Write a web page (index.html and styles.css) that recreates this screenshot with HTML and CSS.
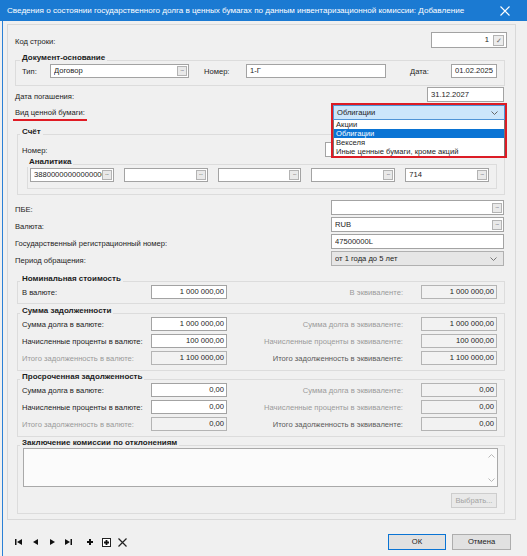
FILE: index.html
```html
<!DOCTYPE html>
<html lang="ru">
<head>
    <meta charset="UTF-8">
    <meta name="viewport" content="width=device-width, initial-scale=1.0">
    <title>Сведения о состоянии государственного долга</title>
    <link rel="stylesheet" href="styles.css">
</head>
<body>
<div class="window">
    <div class="titlebar">
        <span>Сведения о состоянии государственного долга в ценных бумагах по данным инвентаризационной комиссии: Добавление</span>
        <svg width="10" height="10" viewBox="0 0 10 10"><path d="M0.5 0.5L9.5 9.5M9.5 0.5L0.5 9.5" stroke="#fff" stroke-width="1.1"/></svg>
    </div>

    <div class="frame">
        <div class="panel">
            <div class="row row-code">
                <span class="label">Код строки:</span>
                <div class="field num w-code"><span class="val">1</span><span class="check">✓</span></div>
            </div>

            <!-- документ -->
            <div class="group group-doc">
                <div class="group-title">Документ-основание</div>
                <div class="group-box">
                    <div class="doc-row">
                        <span class="glabel w-type">Тип:</span>
                        <div class="field w-typef"><span class="val">Договор</span><span class="dots">...</span></div>
                        <span class="glabel w-num">Номер:</span>
                        <div class="field w-numf"><span class="val">1-Г</span></div>
                        <span class="glabel w-date">Дата:</span>
                        <div class="field w-datef"><span class="val">01.02.2025</span></div>
                    </div>
                </div>
            </div>

            <div class="row row-repay">
                <span class="label">Дата погашения:</span>
                <div class="field w-repay"><span class="val">31.12.2027</span></div>
            </div>

            <div class="row row-kind">
                <span class="label marked">Вид ценной бумаги:</span>
                <div class="combo-anchor">
                    <div class="dropdown">
                        <div class="combo">
                            <span class="val">Облигации</span>
                            <svg width="7" height="4" viewBox="0 0 7 4"><path d="M0.5 0.5L3.5 3.5L6.5 0.5" stroke="#666" fill="none"/></svg>
                        </div>
                        <div class="list">
                            <div class="item">Акции</div>
                            <div class="item active">Облигации</div>
                            <div class="item">Векселя</div>
                            <div class="item">Иные ценные бумаги, кроме акций</div>
                        </div>
                    </div>
                </div>
            </div>

            <!-- счёт -->
            <div class="group group-acc">
                <div class="group-title">Счёт</div>
                <div class="group-box">
                    <div class="row">
                        <span class="glabel">Номер:</span>
                        <div class="field w-accf"><span class="val"></span></div>
                    </div>
                    <div class="group group-an">
                        <div class="group-title">Аналитика</div>
                        <div class="group-box">
                            <div class="an-grid">
                                <div class="field"><span class="val">388000000000000000</span><span class="dots">...</span></div>
                                <div class="field"><span class="val"></span><span class="dots">...</span></div>
                                <div class="field"><span class="val"></span><span class="dots">...</span></div>
                                <div class="field"><span class="val"></span><span class="dots">...</span></div>
                                <div class="field"><span class="val">714</span><span class="dots">...</span></div>
                            </div>
                        </div>
                    </div>
                </div>
            </div>

            <div class="plain-rows">
                <div class="row">
                    <span class="label">ПБЕ:</span>
                    <div class="field w-right"><span class="val"></span><span class="dots">...</span></div>
                </div>
                <div class="row">
                    <span class="label">Валюта:</span>
                    <div class="field w-right"><span class="val">RUB</span><span class="dots">...</span></div>
                </div>
                <div class="row">
                    <span class="label">Государственный регистрационный номер:</span>
                    <div class="field w-right"><span class="val">47500000L</span></div>
                </div>
                <div class="row">
                    <span class="label">Период обращения:</span>
                    <div class="field select w-right">
                        <span class="val">от 1 года до 5 лет</span>
                        <svg width="7" height="4" viewBox="0 0 7 4"><path d="M0.5 0.5L3.5 3.5L6.5 0.5" stroke="#777" fill="none"/></svg>
                    </div>
                </div>
            </div>

            <!-- суммы -->
            <div class="group group-nom">
                <div class="group-title">Номинальная стоимость</div>
                <div class="group-box">
                    <div class="sum-row">
                        <span class="glabel">В валюте:</span>
                        <div class="field num"><span class="val">1 000 000,00</span></div>
                        <span class="glabel right muted">В эквиваленте:</span>
                        <div class="field num off"><span class="val">1 000 000,00</span></div>
                    </div>
                </div>
            </div>

            <div class="group group-sum">
                <div class="group-title">Сумма задолженности</div>
                <div class="group-box sum-rows">
                    <div class="sum-row">
                        <span class="glabel">Сумма долга в валюте:</span>
                        <div class="field num"><span class="val">1 000 000,00</span></div>
                        <span class="glabel right muted">Сумма долга в эквиваленте:</span>
                        <div class="field num off"><span class="val">1 000 000,00</span></div>
                    </div>
                    <div class="sum-row">
                        <span class="glabel">Начисленные проценты в валюте:</span>
                        <div class="field num"><span class="val">100 000,00</span></div>
                        <span class="glabel right muted">Начисленные проценты в эквиваленте:</span>
                        <div class="field num off"><span class="val">100 000,00</span></div>
                    </div>
                    <div class="sum-row">
                        <span class="glabel muted">Итого задолженность в валюте:</span>
                        <div class="field num off"><span class="val">1 100 000,00</span></div>
                        <span class="glabel right half">Итого задолженность в эквиваленте:</span>
                        <div class="field num off"><span class="val">1 100 000,00</span></div>
                    </div>
                </div>
            </div>

            <div class="group group-sum">
                <div class="group-title">Просроченная задолженность</div>
                <div class="group-box sum-rows">
                    <div class="sum-row">
                        <span class="glabel">Сумма долга в валюте:</span>
                        <div class="field num"><span class="val">0,00</span></div>
                        <span class="glabel right muted">Сумма долга в эквиваленте:</span>
                        <div class="field num off"><span class="val">0,00</span></div>
                    </div>
                    <div class="sum-row">
                        <span class="glabel">Начисленные проценты в валюте:</span>
                        <div class="field num"><span class="val">0,00</span></div>
                        <span class="glabel right muted">Начисленные проценты в эквиваленте:</span>
                        <div class="field num off"><span class="val">0,00</span></div>
                    </div>
                    <div class="sum-row">
                        <span class="glabel muted">Итого задолженность в валюте:</span>
                        <div class="field num off"><span class="val">0,00</span></div>
                        <span class="glabel right half">Итого задолженность в эквиваленте:</span>
                        <div class="field num off"><span class="val">0,00</span></div>
                    </div>
                </div>
            </div>

            <div class="group group-note">
                <div class="group-title">Заключение комиссии по отклонениям</div>
                <div class="group-box">
                    <div class="memo">
                        <div class="scroll">
                            <svg width="7" height="4" viewBox="0 0 7 4"><path d="M0.5 3.5L3.5 0.5L6.5 3.5" stroke="#b8b8b8" fill="none"/></svg>
                            <svg width="7" height="4" viewBox="0 0 7 4"><path d="M0.5 0.5L3.5 3.5L6.5 0.5" stroke="#b8b8b8" fill="none"/></svg>
                        </div>
                    </div>
                    <div class="pick-line">
                        <span class="btn btn-off">Выбрать...</span>
                    </div>
                </div>
            </div>
        </div>

        <div class="footer">
            <div class="nav">
                <svg width="7" height="6" viewBox="0 0 7 6"><rect x="0" y="0" width="1.5" height="6"/><path d="M7 0L2 3L7 6Z"/></svg>
                <svg class="gap-a" width="5" height="6" viewBox="0 0 5 6"><path d="M5 0L0 3L5 6Z"/></svg>
                <svg class="gap-b" width="5" height="6" viewBox="0 0 5 6"><path d="M0 0L5 3L0 6Z"/></svg>
                <svg class="gap-c" width="7" height="6" viewBox="0 0 7 6"><path d="M0 0L5 3L0 6Z"/><rect x="5.5" y="0" width="1.5" height="6"/></svg>
                <svg class="gap-d" width="6" height="6" viewBox="0 0 6 6"><path d="M3 0V6M0 3H6" stroke="#111" stroke-width="2"/></svg>
                <svg class="gap-e" width="9" height="9" viewBox="0 0 9 9"><rect x="0.5" y="0.5" width="8" height="8" fill="#fff" stroke="#222"/><path d="M4.5 2V7M2 4.5H7" stroke="#111" stroke-width="1.8"/></svg>
                <svg class="gap-f" width="9" height="9" viewBox="0 0 9 9"><path d="M0.5 0.5L8.5 8.5M8.5 0.5L0.5 8.5" stroke="#222" stroke-width="1.2"/></svg>
            </div>
            <div class="actions">
                <span class="btn btn-main">ОК</span>
                <span class="btn">Отмена</span>
            </div>
        </div>
    </div>
</div>
</body>
</html>
```

FILE: styles.css
```css
* {
    box-sizing: border-box;
}

body {
    margin: 0;
    background: #fff;
    font-family: "Liberation Sans", Arial, sans-serif;
    font-size: 7.6px;
    line-height: 10px;
    color: #1c1c1c;
}

.window {
    width: 527px;
    height: 556px;
    background: #f0f0f0;
    display: flex;
    flex-direction: column;
}

.titlebar {
    height: 21px;
    flex: none;
    background: #1b7ad2;
    color: #fff;
    font-size: 8.1px;
    display: flex;
    align-items: center;
    justify-content: space-between;
    padding: 0 17px 0 7px;
}

.frame {
    flex: 1;
    margin-left: 2px;
    border-left: 1px solid #2a80d6;
    padding: 3px 11px 0 4px;
    display: flex;
    flex-direction: column;
}

.panel {
    height: 496px;
    border: 1px solid #d9d9d9;
    padding: 0 10px 0 7px;
}

.row {
    display: flex;
    align-items: center;
    justify-content: space-between;
    height: 15px;
}

.label {
    padding-top: 4px;
    white-space: nowrap;
}

.glabel {
    padding-top: 2px;
    white-space: nowrap;
}

.muted {
    color: #9a9a9a;
}

.half {
    color: #5a5a5a;
}

/* поля */
.field {
    height: 15px;
    min-width: 0;
    display: flex;
    align-items: center;
    background: #fff;
    border: 1px solid #a3a3a3;
    padding: 0 1px 0 3px;
}

.field .val {
    flex: 1;
    min-width: 0;
    overflow: hidden;
    white-space: nowrap;
}

.num .val {
    text-align: right;
    padding-right: 1px;
}

.off {
    background: #f2f2f2;
    border-color: #b4b4b4;
}

.dots {
    flex: none;
    width: 10px;
    height: 10px;
    border: 1px solid #b3b3b3;
    background: #e9e9e9;
    font-size: 6px;
    line-height: 5px;
    text-align: center;
    color: #333;
    letter-spacing: -0.5px;
}

.check {
    width: 11px;
    height: 11px;
    margin-left: 3px;
    border: 1px solid #b3b3b3;
    background: #ececec;
    color: #666;
    font-size: 7px;
    line-height: 9px;
    text-align: center;
}

.select {
    background: #e6e6e6;
    border-color: #b0b0b0;
    padding-right: 6px;
}

.row-code {
    margin-top: 7px;
    height: 16px;
}

.w-code {
    width: 76px;
    height: 16px;
    margin-right: -2px;
    padding-right: 2px;
}

/* группы */
.group-title {
    position: relative;
    width: fit-content;
    margin-left: 3px;
    margin-bottom: -3px;
    padding: 0 2px;
    background: #f0f0f0;
    font-size: 8px;
    font-weight: bold;
    line-height: 10px;
    height: 10px;
}

.group-box {
    border: 1px solid #dcdcdc;
}

.group-doc {
    margin-top: 5px;
}

.group-doc .group-title {
    margin-left: 5px;
}

.group-doc .group-box {
    padding: 3px 7px 7px 6px;
}

.doc-row {
    display: flex;
    align-items: center;
    height: 14px;
}

.doc-row .field {
    height: 14px;
}

.w-type { width: 28px; }
.w-typef { width: 139px; }
.w-num { width: 42px; margin-left: 15px; }
.w-numf { width: 140px; }
.w-date { width: 41px; margin-left: 24px; }
.w-datef { width: 46px; }

.row-repay {
    margin-top: 1px;
}

.w-repay {
    width: 77px;
    margin-right: 1px;
}

.row-kind {
    margin-top: 3px;
}

.marked {
    margin-left: -2px;
    padding: 4px 2px 1px;
    border-bottom: 2px solid #e01b24;
}

/* открытый список */
.combo-anchor {
    position: relative;
    width: 174px;
    height: 15px;
    margin-right: -1px;
}

.dropdown {
    position: absolute;
    left: -1px;
    top: -2px;
    width: 176px;
    border: 2px solid #dc1c25;
    z-index: 2;
}

.combo {
    height: 15px;
    display: flex;
    align-items: center;
    background: #cce6fb;
    border: 1px solid #4f94d6;
    padding: 0 6px 0 3px;
}

.combo .val {
    flex: 1;
}

.list {
    background: #fff;
    border-left: 1px solid #777;
    border-right: 1px solid #777;
}

.item {
    height: 9px;
    line-height: 9px;
    padding-left: 2px;
    white-space: nowrap;
}

.item.active {
    background: #0a74d4;
    color: #fff;
}

.group-acc {
    margin-top: 7px;
    margin-left: 2px;
}

.group-acc > .group-box {
    padding: 7px 7px 5px 4px;
}

.w-accf {
    width: 172px;
}

.group-an .group-title {
    margin-left: 0;
}

.group-an {
    margin-left: 5px;
}

.group-an .group-box {
    padding: 3px 7px 6px 2px;
}

.an-grid {
    display: grid;
    grid-template-columns: repeat(5, minmax(0, 1fr));
    column-gap: 10px;
}

.an-grid .field {
    height: 14px;
}

.plain-rows {
    margin-top: 5px;
    display: flex;
    flex-direction: column;
    gap: 2px;
}

.w-right {
    width: 173px;
    margin-right: 1px;
}

.group-nom {
    margin-top: 8px;
    margin-left: 2px;
}

.group-nom .group-box {
    padding: 3px 7px 4px 4px;
}

.sum-row {
    display: grid;
    grid-template-columns: 129px 76px 1fr 76px;
    align-items: center;
    height: 14px;
}

.sum-row .field {
    height: 14px;
}

.glabel.right {
    text-align: right;
    padding-right: 18px;
}

.group-sum {
    margin-top: 2px;
    margin-left: 2px;
}

.group-sum + .group-sum {
    margin-top: 1px;
}

.sum-rows {
    display: flex;
    flex-direction: column;
    gap: 3px;
    padding: 3px 7px 5px 4px;
}

.group-note {
    margin-top: 1px;
    margin-left: 2px;
}

.group-note .group-box {
    padding: 2px 6px 5px 5px;
}

.memo {
    height: 39px;
    background: #fbfbfb;
    border: 1px solid #a9a9a9;
    display: flex;
    justify-content: flex-end;
}

.scroll {
    width: 12px;
    display: flex;
    flex-direction: column;
    justify-content: space-between;
    align-items: center;
    padding: 5px 0 4px;
}

.pick-line {
    display: flex;
    justify-content: flex-end;
    margin-top: 6px;
}

/* кнопки */
.btn {
    display: flex;
    align-items: center;
    justify-content: center;
    width: 59px;
    height: 16px;
    background: #e1e1e1;
    border: 1px solid #adadad;
}

.btn-off {
    width: 46px;
    height: 15px;
    margin-right: 1px;
    background: #e9e9e9;
    border-color: #cdcdcd;
    color: #a3a3a3;
}

.btn-main {
    width: 58px;
    border-color: #0a74d4;
}

.footer {
    flex: 1;
    display: flex;
    align-items: center;
    justify-content: space-between;
    padding: 8px 5px 0 8px;
}

.nav {
    display: flex;
    align-items: center;
}

.nav svg {
    fill: #111;
}

.gap-a { margin-left: 11px; }
.gap-b { margin-left: 12px; }
.gap-c { margin-left: 10px; }
.gap-d { margin-left: 15px; }
.gap-e { margin-left: 9px; }
.gap-f { margin-left: 7px; }

.actions {
    display: flex;
    gap: 6px;
}
```
